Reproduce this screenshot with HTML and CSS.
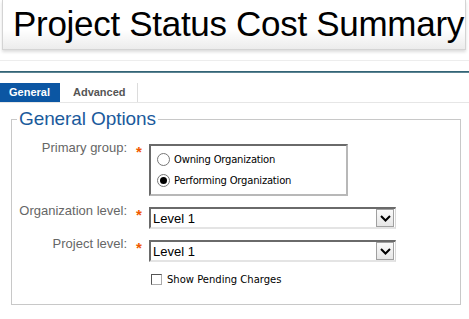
FILE: index.html
```
<!DOCTYPE html>
<html>
<head>
<meta charset="utf-8">
<link rel="stylesheet" href="styles.css">
</head>
<body>
<div class="title">Project Status Cost Summary</div>
<div class="rule-light"></div>
<div class="rule-dark"></div>
<div class="tabs">
  <div class="tab active">General</div>
  <div class="tab">Advanced</div>
</div>
<fieldset class="options">
  <legend>General Options</legend>
  <div class="form">
    <div class="label">Primary group:</div>
    <div class="star">*</div>
    <div class="radiobox">
      <div class="radio-row"><span class="radio"></span>Owning Organization</div>
      <div class="radio-row"><span class="radio checked"></span>Performing Organization</div>
    </div>

    <div class="label">Organization level:</div>
    <div class="star">*</div>
    <div class="select"><span class="value">Level 1</span><span class="arrow"><svg width="11" height="7" viewBox="0 0 11 7"><path d="M1 1 L5.5 5.5 L10 1" fill="none" stroke="#000" stroke-width="2"/></svg></span></div>

    <div class="label">Project level:</div>
    <div class="star">*</div>
    <div class="select"><span class="value">Level 1</span><span class="arrow"><svg width="11" height="7" viewBox="0 0 11 7"><path d="M1 1 L5.5 5.5 L10 1" fill="none" stroke="#000" stroke-width="2"/></svg></span></div>

    <div class="label"></div>
    <div class="star"></div>
    <div class="check-row"><span class="checkbox"></span>Show Pending Charges</div>
  </div>
</fieldset>
</body>
</html>
```
FILE: styles.css
```
html, body {
  margin: 0;
  padding: 0;
  background: #fff;
}
body {
  width: 469px;
  height: 319px;
  overflow: hidden;
  font-family: "Liberation Sans", Arial, sans-serif;
}
.title {
  margin: 0 3px 0 2px;
  height: 50px;
  box-sizing: border-box;
  border: 1px solid #d4d4d4;
  border-top: none;
  background: linear-gradient(to bottom, #ffffff 0%, #ffffff 60%, #ececec 100%);
  box-shadow: 0 2px 3px #dcdcdc;
  font-size: 35px;
  letter-spacing: -0.3px;
  line-height: 48px;
  padding-left: 10px;
  color: #000;
  white-space: nowrap;
}
.rule-light {
  margin-top: 10px;
  height: 1px;
  background: #ededed;
}
.rule-dark {
  margin-top: 10px;
  height: 2px;
  background: linear-gradient(to bottom, #1f5468, #6f93a0);
}
.tabs {
  margin-top: 10px;
  display: flex;
  height: 19px;
  border-bottom: 1px solid #e6e6e6;
}
.tab {
  font-size: 11px;
  font-weight: bold;
  line-height: 19px;
  color: #555;
  padding: 0 11px 0 13px;
  border-right: 1px solid #dcdcdc;
}
.tab.active {
  background: #0b56a3;
  color: #fff;
  padding: 0 10px 0 9px;
  border-right: none;
}
.options {
  margin: 6px 8px 0 11px;
  padding: 0;
  border: 1px solid #c8c8c8;
  height: 196px;
  box-sizing: border-box;
}
.options legend {
  margin-left: 5px;
  padding: 0 2px;
  font-size: 19px;
  letter-spacing: -0.1px;
  color: #1a5a9c;
  line-height: 20px;
}
.form {
  display: grid;
  grid-template-columns: 115px 22px 247px;
  row-gap: 11px;
  margin-top: 15px;
}
.label {
  text-align: right;
  font-size: 13px;
  color: #666;
  line-height: 14px;
  margin-top: -3px;
}
.star {
  color: #f05a00;
  font-size: 15px;
  font-weight: bold;
  padding-left: 9px;
  line-height: 16px;
}
.radiobox {
  width: 199px;
  height: 52px;
  box-sizing: border-box;
  border: 2px solid #6a6a6a;
  border-right-color: #b8b8b8;
  border-bottom-color: #b8b8b8;
  padding: 6px 0 0 6px;
  justify-self: start;
}
.radio-row {
  display: flex;
  align-items: center;
  font-family: "DejaVu Sans", Verdana, sans-serif;
  font-size: 10px;
  letter-spacing: -0.2px;
  color: #000;
  height: 15px;
  margin-bottom: 6px;
}
.radio {
  width: 13px;
  height: 13px;
  box-sizing: border-box;
  border: 1px solid #777;
  border-radius: 50%;
  margin-right: 4px;
  background: #fff;
  position: relative;
}
.radio.checked::after {
  content: "";
  position: absolute;
  left: 2px;
  top: 2px;
  width: 7px;
  height: 7px;
  border-radius: 50%;
  background: #000;
}
.select {
  display: flex;
  width: 247px;
  height: 22px;
  box-sizing: border-box;
  border: 2px solid #6a6a6a;
  border-right: 1px solid #d8d8d8;
  border-bottom: 2px solid #e4e4e4;
  align-items: center;
  justify-content: space-between;
}
.select .value {
  font-size: 13px;
  padding-left: 2px;
  color: #000;
}
.select .arrow {
  width: 18px;
  height: 18px;
  box-sizing: border-box;
  border: 1px solid #a0a0a0;
  background: linear-gradient(#fafafa, #e6e6e6);
  display: flex;
  align-items: center;
  justify-content: center;
  margin-right: 1px;
}
.check-row {
  display: flex;
  align-items: center;
  font-family: "DejaVu Sans", Verdana, sans-serif;
  font-size: 10px;
  color: #000;
  padding-left: 2px;
  margin-top: 1px;
}
.checkbox {
  width: 11px;
  height: 11px;
  box-sizing: border-box;
  border: 1px solid #555;
  border-right-color: #aaa;
  border-bottom-color: #aaa;
  margin-right: 5px;
  background: #fff;
}
```
